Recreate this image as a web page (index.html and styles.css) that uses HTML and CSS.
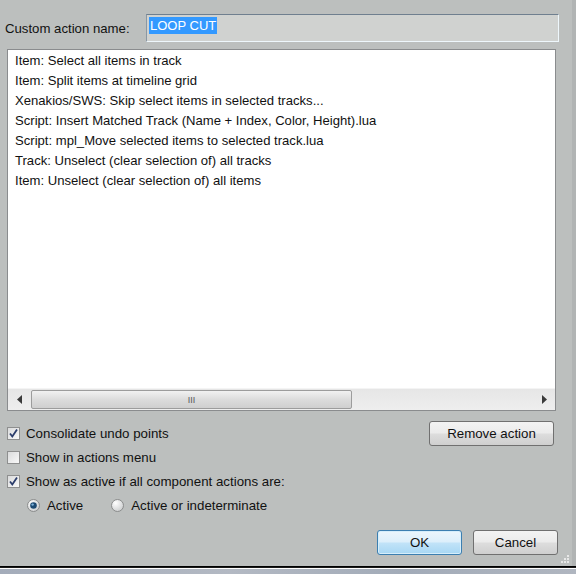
FILE: index.html
```html
<!DOCTYPE html>
<html>
<head>
<meta charset="utf-8">
<title>Custom action</title>
<link rel="stylesheet" href="styles.css">
</head>
<body>
<div class="dialog">
  <div class="name-row">
    <label class="name-label" for="action-name">Custom action name:</label>
    <div class="name-input" id="action-name"><span class="selected-text">LOOP CUT</span></div>
  </div>

  <div class="action-list">
    <ul class="items">
      <li>Item: Select all items in track</li>
      <li>Item: Split items at timeline grid</li>
      <li>Xenakios/SWS: Skip select items in selected tracks...</li>
      <li>Script: Insert Matched Track (Name + Index, Color, Height).lua</li>
      <li>Script: mpl_Move selected items to selected track.lua</li>
      <li>Track: Unselect (clear selection of) all tracks</li>
      <li>Item: Unselect (clear selection of) all items</li>
    </ul>
    <div class="hscroll">
      <div class="arrow arrow-left"><svg width="6" height="9" viewBox="0 0 6 9"><path d="M5 0 L0 4.5 L5 9 Z" fill="#3a3a3a"/></svg></div>
      <div class="thumb"><span class="grip">III</span></div>
      <div class="track-rest"></div>
      <div class="arrow arrow-right"><svg width="6" height="9" viewBox="0 0 6 9"><path d="M1 0 L6 4.5 L1 9 Z" fill="#3a3a3a"/></svg></div>
    </div>
  </div>

  <div class="options">
    <div class="checks">
      <div class="row">
        <svg class="box" width="13" height="13" viewBox="0 0 13 13">
          <rect x="0.5" y="0.5" width="12" height="12" fill="url(#boxfill)" stroke="#8e8f8f"/>
          <path d="M3 6.5 L5.3 9.5 L10 2.5" fill="none" stroke="#2b3d6b" stroke-width="1.8"/>
        </svg>
        <span>Consolidate undo points</span>
      </div>
      <div class="row">
        <svg class="box" width="13" height="13" viewBox="0 0 13 13">
          <rect x="0.5" y="0.5" width="12" height="12" fill="url(#boxfill)" stroke="#8e8f8f"/>
        </svg>
        <span>Show in actions menu</span>
      </div>
      <div class="row">
        <svg class="box" width="13" height="13" viewBox="0 0 13 13">
          <rect x="0.5" y="0.5" width="12" height="12" fill="url(#boxfill)" stroke="#8e8f8f"/>
          <path d="M3 6.5 L5.3 9.5 L10 2.5" fill="none" stroke="#2b3d6b" stroke-width="1.8"/>
        </svg>
        <span>Show as active if all component actions are:</span>
      </div>
      <div class="row radios">
        <div class="radio-item">
          <svg class="radio" width="13" height="13" viewBox="0 0 13 13">
            <circle cx="6.5" cy="6.5" r="6" fill="url(#radiofill)" stroke="#8a8c8c"/>
            <circle cx="6.5" cy="6.5" r="3.3" fill="#1c4a73"/>
            <circle cx="5.6" cy="5.6" r="1.2" fill="#7fb4dc"/>
          </svg>
          <span>Active</span>
        </div>
        <div class="radio-item">
          <svg class="radio" width="13" height="13" viewBox="0 0 13 13">
            <circle cx="6.5" cy="6.5" r="6" fill="url(#radiofill)" stroke="#8a8c8c"/>
          </svg>
          <span>Active or indeterminate</span>
        </div>
      </div>
    </div>
    <button class="btn remove-btn">Remove action</button>
  </div>

  <div class="footer">
    <button class="btn default-btn">OK</button>
    <button class="btn">Cancel</button>
  </div>

  <svg class="size-grip" width="10" height="10" viewBox="0 0 10 10">
    <rect x="7" y="1" width="2" height="2" fill="#e8e8e8"/>
    <rect x="4" y="4" width="2" height="2" fill="#e8e8e8"/>
    <rect x="7" y="4" width="2" height="2" fill="#e8e8e8"/>
    <rect x="1" y="7" width="2" height="2" fill="#e8e8e8"/>
    <rect x="4" y="7" width="2" height="2" fill="#e8e8e8"/>
    <rect x="7" y="7" width="2" height="2" fill="#e8e8e8"/>
  </svg>

  <svg class="defs" width="0" height="0">
    <defs>
      <linearGradient id="boxfill" x1="0" y1="0" x2="1" y2="1">
        <stop offset="0" stop-color="#d9dadb"/>
        <stop offset="1" stop-color="#fafafa"/>
      </linearGradient>
      <radialGradient id="radiofill" cx="0.35" cy="0.3" r="0.8">
        <stop offset="0" stop-color="#ffffff"/>
        <stop offset="1" stop-color="#c9cbcc"/>
      </radialGradient>
    </defs>
  </svg>
</div>
<div class="window-edge"></div>
</body>
</html>
```

FILE: styles.css
```css
html, body {
  margin: 0;
  padding: 0;
}

body {
  width: 576px;
  height: 574px;
  overflow: hidden;
  background: #a7afbb;
  font-family: "Liberation Sans", Arial, sans-serif;
  font-size: 13px;
  color: #111;
}

.dialog {
  position: relative;
  width: 572px;
  height: 566px;
  background: #bcbfbe;
  border-right: 4px solid #b1b4b4;
  display: flex;
  flex-direction: column;
}

/* name field */
.name-row {
  display: flex;
  align-items: center;
  padding: 14px 0 0 5px;
}

.name-label {
  width: 141px;
  font-size: 13.2px;
}

.name-input {
  box-sizing: border-box;
  width: 413px;
  height: 28px;
  background: #d0d2d0;
  border-top: 1px solid #6f7f8f;
  border-left: 1px solid #8a97a3;
  border-right: 1px solid #eef7fc;
  border-bottom: 1px solid #eef7fc;
  padding: 2px 0 0 2px;
}

.selected-text {
  display: inline-block;
  background: #3399ff;
  color: #fff;
  height: 17px;
  line-height: 17px;
  padding: 0 1px;
}

/* action list */
.action-list {
  box-sizing: border-box;
  margin: 7px 0 0 7px;
  width: 549px;
  height: 362px;
  background: #fff;
  border: 1px solid #8a8c8e;
  display: flex;
  flex-direction: column;
}

.items {
  flex: 1;
  list-style: none;
  margin: 0;
  padding: 1px 0 0 7px;
  font-size: 13.1px;
}

.items li {
  height: 20px;
  line-height: 20px;
  white-space: nowrap;
}

.hscroll {
  height: 21px;
  display: flex;
  align-items: center;
  background: linear-gradient(#e6e6e6, #eeeeee);
  border-top: 1px solid #f4f4f4;
}

.arrow {
  width: 23px;
  height: 21px;
  display: flex;
  align-items: center;
  justify-content: center;
}

.thumb {
  box-sizing: border-box;
  width: 321px;
  height: 19px;
  border: 1px solid #9c9c9c;
  border-radius: 2px;
  background: linear-gradient(#f1f1f1, #dcdcdc 50%, #cfcfcf 100%);
  display: flex;
  align-items: center;
  justify-content: center;
}

.grip {
  font-size: 9px;
  color: #555;
  letter-spacing: 0;
  transform: scaleY(1.1);
}

.track-rest {
  flex: 1;
}

/* options area */
.options {
  display: flex;
  justify-content: space-between;
  align-items: flex-start;
  margin-top: 10px;
  padding-left: 7px;
  padding-right: 18px;
}

.checks {
  display: flex;
  flex-direction: column;
  font-size: 13.3px;
}

.row {
  height: 24px;
  display: flex;
  align-items: center;
  gap: 6px;
}

.box, .radio {
  flex: none;
}

.radios {
  padding-left: 20px;
  gap: 0;
}

.radio-item {
  display: flex;
  align-items: center;
  gap: 7px;
  margin-right: 28px;
}

.btn {
  box-sizing: border-box;
  height: 25px;
  border: 1px solid #707070;
  border-radius: 3px;
  background: linear-gradient(#f3f3f3, #ebebeb 48%, #dddddd 52%, #cfcfcf);
  font-family: "Liberation Sans", Arial, sans-serif;
  font-size: 13.3px;
  color: #111;
  padding: 0;
  width: 85px;
}

.remove-btn {
  width: 125px;
}

.default-btn {
  border-color: #3c7fb1;
  background: linear-gradient(#ecf6fc, #dceffb 48%, #c1e3f8 52%, #a7d7f4);
  box-shadow: inset 0 0 0 1px #d6eefb;
}

.footer {
  display: flex;
  justify-content: flex-end;
  gap: 11px;
  margin-top: 13px;
  padding-right: 14px;
}

.size-grip {
  position: absolute;
  right: 2px;
  bottom: 2px;
}

.defs {
  position: absolute;
}

/* frame edge below the dialog */
.window-edge {
  height: 7px;
  border-top: 1px solid #000;
  box-shadow: inset 0 1px 0 #1a1a1a, inset 0 2px 0 #fff;
  background: linear-gradient(90deg, #a4acba, #b3b9c3 40%, #a2abb8 70%, #b0b6c0);
}
```
